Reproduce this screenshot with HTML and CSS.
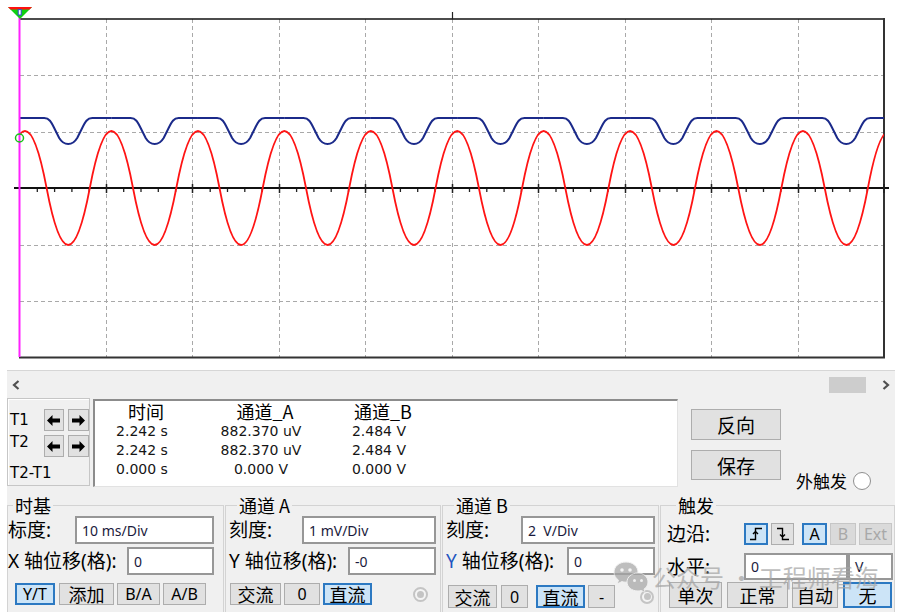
FILE: index.html
```html
<!DOCTYPE html>
<html lang="zh">
<head>
<meta charset="utf-8">
<title>示波器</title>
<link rel="stylesheet" href="styles.css">
</head>
<body>
<div class="scope">
  <svg class="plot" width="908" height="370" viewBox="0 0 908 370" xmlns="http://www.w3.org/2000/svg">
    <defs>
      <clipPath id="area"><rect x="20" y="10" width="864" height="348"/></clipPath>
      <path id="dip" d="M-43.3 118 H-24 C-19 118 -17 122 -14 128 L-9 138 C-6 143 -3 144 0 144 C3 144 6 143 9 138 L14 128 C17 122 19 118 24 118 H43.3"/>
    </defs>
    <path class="grid" d="M106.5 19V357 M192.5 19V357 M279.5 19V357 M365.5 19V357 M452.5 19V357 M538.5 19V357 M625.5 19V357 M711.5 19V357 M798.5 19V357 M20 75.5H884 M20 132.5H884 M20 245.5H884 M20 301.5H884"/>
    <path class="frame-top" d="M20 19H884"/>
    <path class="frame" d="M884 18V358 M19 357.5H885"/>
    <path class="axis" d="M14 188H889"/>
    <path class="ticks" d="M37.3 189V192 M54.6 189V192 M71.9 189V192 M89.2 189V192 M123.7 189V192 M141 189V192 M158.3 189V192 M175.6 189V192 M210.2 189V192 M227.5 189V192 M244.8 189V192 M262.1 189V192 M296.6 189V192 M313.9 189V192 M331.2 189V192 M348.5 189V192 M383.1 189V192 M400.4 189V192 M417.7 189V192 M435 189V192 M469.5 189V192 M486.8 189V192 M504.1 189V192 M521.4 189V192 M556 189V192 M573.3 189V192 M590.6 189V192 M607.9 189V192 M642.4 189V192 M659.7 189V192 M677 189V192 M694.3 189V192 M728.9 189V192 M746.2 189V192 M763.5 189V192 M780.8 189V192 M815.3 189V192 M832.6 189V192 M849.9 189V192 M867.2 189V192"/>
    <path class="majors" d="M106.5 184V193 M192.5 184V193 M279.5 184V193 M365.5 184V193 M452.5 184V193 M538.5 184V193 M625.5 184V193 M711.5 184V193 M798.5 184V193 M884 184V193"/>
    <g clip-path="url(#area)">
      <g class="chb">
        <use href="#dip" x="-18.25"/>
        <use href="#dip" x="68.2"/>
        <use href="#dip" x="154.65"/>
        <use href="#dip" x="241.1"/>
        <use href="#dip" x="327.55"/>
        <use href="#dip" x="414"/>
        <use href="#dip" x="500.45"/>
        <use href="#dip" x="586.9"/>
        <use href="#dip" x="673.35"/>
        <use href="#dip" x="759.8"/>
        <use href="#dip" x="846.25"/>
      </g>
      <path class="cha" d="M3.4 188 Q25 74 46.6 188 T89.8 188 T133 188 T176.3 188 T219.5 188 T262.7 188 T306 188 T349.2 188 T392.4 188 T435.6 188 T478.9 188 T522.1 188 T565.3 188 T608.5 188 T651.8 188 T695 188 T738.2 188 T781.4 188 T824.7 188 T867.9 188 T911.1 188"/>
    </g>
    <path class="trig" d="M452.5 12V19"/>
    <path class="cursor" d="M19.5 15V357"/>
    <polygon class="mk-green" points="8,7 32,7 20,19"/>
    <polygon class="mk-red" points="8,7 32,7 29.6,9.6 10.4,9.6"/>
    <rect class="mk-num" x="18.2" y="9.6" width="3" height="5.4"/>
    <circle class="mk-a" cx="19.5" cy="138" r="4"/>
  </svg>
</div>

<div class="panel">
  <div class="hscroll">
    <svg class="chev" width="8" height="10" viewBox="0 0 8 10"><polyline points="6.5,1 2,5 6.5,9"/></svg>
    <span class="thumb"></span>
    <svg class="chev chev-r" width="8" height="10" viewBox="0 0 8 10"><polyline points="1.5,1 6,5 1.5,9"/></svg>
  </div>

  <div class="cursors">
    <div class="tbox">
      <div class="trow">
        <span class="tlabel">T1</span>
        <span class="abtn"><svg width="13" height="11" viewBox="0 0 13 11"><path d="M0 5.5 L5.5 0 V3.5 H13 V7.5 H5.5 V11 Z"/></svg></span>
        <span class="abtn"><svg width="13" height="11" viewBox="0 0 13 11"><path d="M13 5.5 L7.5 0 V3.5 H0 V7.5 H7.5 V11 Z"/></svg></span>
      </div>
      <div class="trow trow2">
        <span class="tlabel">T2</span>
        <span class="abtn"><svg width="13" height="11" viewBox="0 0 13 11"><path d="M0 5.5 L5.5 0 V3.5 H13 V7.5 H5.5 V11 Z"/></svg></span>
        <span class="abtn"><svg width="13" height="11" viewBox="0 0 13 11"><path d="M13 5.5 L7.5 0 V3.5 H0 V7.5 H7.5 V11 Z"/></svg></span>
      </div>
      <div class="tlabel tdiff">T2-T1</div>
    </div>

    <div class="readout">
      <div class="rgrid">
        <span class="rh">时间</span><span class="rh">通道_A</span><span class="rh">通道_B</span>
        <span class="rv">2.242 s</span><span class="rv">882.370 uV</span><span class="rv">2.484 V</span>
        <span class="rv">2.242 s</span><span class="rv">882.370 uV</span><span class="rv">2.484 V</span>
        <span class="rv">0.000 s</span><span class="rv">0.000 V</span><span class="rv">0.000 V</span>
      </div>
    </div>

    <div class="side">
      <div class="sbtns">
        <span class="btn sbtn">反向</span>
        <span class="btn sbtn sbtn2">保存</span>
      </div>
      <div class="ext">外触发<span class="radio"></span></div>
    </div>
  </div>

  <div class="groups">
    <fieldset class="grp g-time">
      <legend>时基</legend>
      <div class="frow"><span class="lbl">标度:</span><span class="inp w-long">10 ms/Div</span></div>
      <div class="frow r2"><span class="lbl">X 轴位移(格):</span><span class="inp w-short">0</span></div>
      <div class="brow">
        <span class="btn on lat b-yt">Y/T</span>
        <span class="btn b-add">添加</span>
        <span class="btn lat b-ba">B/A</span>
        <span class="btn lat b-ab">A/B</span>
      </div>
    </fieldset>

    <fieldset class="grp g-cha">
      <legend>通道 A</legend>
      <div class="frow"><span class="lbl">刻度:</span><span class="inp w-long">1 mV/Div</span></div>
      <div class="frow r2"><span class="lbl">Y 轴位移(格):</span><span class="inp w-short">-0</span></div>
      <div class="brow">
        <span class="btn a-ac">交流</span>
        <span class="btn lat a-0">0</span>
        <span class="btn on a-dc">直流</span>
        <span class="dradio"></span>
      </div>
    </fieldset>

    <fieldset class="grp g-chb">
      <legend>通道 B</legend>
      <div class="frow"><span class="lbl">刻度:</span><span class="inp w-long">2  V/Div</span></div>
      <div class="frow r2"><span class="lbl"><span class="ylab">Y</span> 轴位移(格):</span><span class="inp w-short">0</span></div>
      <div class="brow">
        <span class="btn b-ac">交流</span>
        <span class="btn lat b-0">0</span>
        <span class="btn on b-dc">直流</span>
        <span class="btn lat b-minus">-</span>
        <span class="dradio b-radio"></span>
      </div>
    </fieldset>

    <fieldset class="grp g-trig">
      <legend>触发</legend>
      <div class="trow-a">
        <span class="lbl tl">边沿:</span>
        <span class="btn on e-btn"><svg width="16" height="14" viewBox="0 0 16 14"><path d="M2 12.5 H7.5 V1.5 H14 M5 7 L7.5 4.5 L10 7"/></svg></span>
        <span class="btn e-btn e-f"><svg width="16" height="14" viewBox="0 0 16 14"><path d="M2 1.5 H7.5 V12.5 H14 M5 7.5 L7.5 10 L10 7.5"/></svg></span>
        <span class="btn on lat src-a">A</span>
        <span class="btn off lat src-b">B</span>
        <span class="btn off lat src-ext">Ext</span>
      </div>
      <div class="trow-b">
        <span class="lbl tl">水平:</span>
        <span class="inp lvl">0</span>
        <span class="inp unit">V</span>
      </div>
      <div class="trow-c">
        <span class="btn m-once">单次</span>
        <span class="btn m-norm">正常</span>
        <span class="btn m-auto">自动</span>
        <span class="btn on m-none">无</span>
      </div>
    </fieldset>
  </div>
</div>

<div class="watermark">
  <svg class="wx" width="36" height="34" viewBox="0 0 36 34">
    <path class="wx-big" d="M13 2 C6 2 1 6.6 1 12.2 C1 15.4 2.7 18.2 5.4 20 L4.4 24 L8.8 21.6 C10.1 22 11.5 22.2 13 22.2 C20 22.2 25 17.8 25 12.2 C25 6.6 20 2 13 2 Z"/>
    <circle class="wx-eye" cx="9" cy="10" r="1.8"/>
    <circle class="wx-eye" cx="17" cy="10" r="1.8"/>
    <path class="wx-small" d="M25 13 C18.7 13 14 17 14 22 C14 27 18.7 31 25 31 C26.2 31 27.3 30.8 28.4 30.5 L32 32.5 L31.1 29 C33.5 27.5 35 25 35 22 C35 17 30.6 13 25 13 Z"/>
    <circle class="wx-eye" cx="21.5" cy="20.5" r="1.5"/>
    <circle class="wx-eye" cx="28.5" cy="20.5" r="1.5"/>
  </svg>
  <span class="wtext">公众号 · 工程师看海</span>
</div>
</body>
</html>
```

FILE: styles.css
```css
* { box-sizing: border-box; }
html, body { margin: 0; padding: 0; }
body {
  width: 908px;
  height: 612px;
  overflow: hidden;
  background: #ffffff;
  position: relative;
  font-family: "Noto Sans", "Noto Sans CJK SC", sans-serif;
  color: #000;
}

/* ---------- scope plot ---------- */
.scope { height: 370px; }
.plot { display: block; }
.grid { fill: none; stroke: #a9a9a9; stroke-width: 1; stroke-dasharray: 4 3; }
.frame-top { fill: none; stroke: #111; stroke-width: 1.5; }
.frame { fill: none; stroke: #333; stroke-width: 2; }
.axis { fill: none; stroke: #111; stroke-width: 2; }
.ticks { fill: none; stroke: #222; stroke-width: 1.3; }
.majors { fill: none; stroke: #222; stroke-width: 1.5; }
.chb { fill: none; stroke: #1b2a8a; stroke-width: 2; stroke-linejoin: round; }
.cha { fill: none; stroke: #ff1414; stroke-width: 1.8; }
.trig { fill: none; stroke: #222; stroke-width: 1.2; }
.cursor { fill: none; stroke: #ff22ff; stroke-width: 2; }
.mk-green { fill: #10d010; }
.mk-red { fill: #ff1010; }
.mk-num { fill: #ffffff; stroke: #2a4bd0; stroke-width: 1; }
.mk-a { fill: none; stroke: #18c018; stroke-width: 1.5; }

/* ---------- panel ---------- */
.panel {
  margin-left: 7px;
  width: 888px;
  height: 242px;
  background: #f0f0f0;
  border-top: 1px solid #d6d6d6;
  display: flex;
  flex-direction: column;
}
.hscroll {
  height: 27px;
  flex: none;
  display: flex;
  align-items: center;
  padding: 0 5px 0 5px;
}
.chev { display: block; }
.chev polyline { fill: none; stroke: #505050; stroke-width: 2.2; }
.thumb {
  margin-left: auto;
  width: 37px;
  height: 16px;
  background: #cdcdcd;
}
.chev-r { margin-left: 16px; }

/* cursors row */
.cursors {
  height: 88px;
  flex: none;
  display: flex;
  align-items: flex-start;
}
.tbox {
  width: 83px;
  height: 88px;
  border: 1px solid #c6c6c6;
  box-shadow: inset 1px 1px 0 #ffffff;
  padding-top: 10px;
  display: flex;
  flex-direction: column;
}
.trow {
  display: flex;
  align-items: center;
  gap: 4px;
  height: 22px;
}
.trow2 { margin-top: 4px; height: 23px; align-items: flex-start; }
.tlabel {
  font-family: "DejaVu Sans", sans-serif;
  font-size: 15px;
  line-height: 15px;
  width: 30px;
  margin-left: 2px;
  margin-right: -4px;
  padding-left: 0;
}
.tdiff { width: auto; margin-top: 5px; margin-left: 2px; line-height: 20px; }
.abtn {
  width: 21px;
  height: 22px;
  background: #e1e1e1;
  border: 1px solid #adadad;
  display: flex;
  align-items: center;
  justify-content: center;
}
.abtn svg { display: block; fill: #000; }
.trow .abtn:nth-child(2) { margin-left: 4px; }

.readout {
  margin-left: 3px;
  width: 585px;
  height: 88px;
  margin-top: 1px;
  background: #ffffff;
  border-top: 2px solid #8c8c8c;
  border-left: 2px solid #8c8c8c;
  border-right: 1px solid #e2e2e2;
  border-bottom: 1px solid #e2e2e2;
}
.rgrid {
  display: grid;
  grid-template-columns: 94px 144px 92px;
  grid-template-rows: 21px 19px 19px 19px;
}
.rh {
  font-family: "Noto Sans CJK SC", sans-serif;
  font-size: 18px;
  line-height: 21px;
  text-align: center;
  padding-left: 8px;
}
.rv {
  font-family: "DejaVu Sans", sans-serif;
  font-size: 14px;
  line-height: 19px;
  text-align: center;
  color: #151515;
}

.side {
  display: flex;
  margin-left: 13px;
}
.sbtns {
  display: flex;
  flex-direction: column;
  padding-top: 11px;
}
.btn {
  display: flex;
  align-items: center;
  justify-content: center;
  background: #e1e1e1;
  border: 1px solid #adadad;
  font-family: "Noto Sans CJK SC", sans-serif;
  font-size: 18px;
  line-height: 1;
  color: #000;
  flex: none;
}
.btn.lat { font-family: "Noto Sans", sans-serif; font-size: 16px; }
.btn.on { background: #cce4f7; border: 2px solid #2c79c2; }
.btn.off { color: #a8a8a8; background: #dadada; border-color: #c6c6c6; }
.sbtn { width: 90px; height: 31px; font-size: 19px; }
.sbtn2 { margin-top: 10px; height: 30px; }
.ext {
  margin-top: 73px;
  margin-left: 15px;
  display: flex;
  align-items: center;
  font-family: "Noto Sans CJK SC", sans-serif;
  font-size: 17px;
  line-height: 20px;
}
.radio {
  width: 18px;
  height: 18px;
  border-radius: 50%;
  background: #fff;
  border: 1px solid #8f8f8f;
  margin-left: 6px;
}

/* ---------- groups ---------- */
.groups {
  display: flex;
  flex: none;
}
.grp {
  margin: 8px 0 0 0;
  padding: 0;
  border: 1px solid #d3d3d3;
  border-bottom: none;
  height: 130px;
  min-width: 0;
}
.grp legend {
  font-family: "Noto Sans CJK SC", sans-serif;
  font-size: 18px;
  line-height: 22px;
  padding: 0 2px;
}
.g-time { width: 217px; padding: 0 9px 0 0; }
.g-time legend { margin-left: 5px; }
.g-cha { width: 216px; margin-left: 1px; padding: 0 4px 0 3px; }
.g-cha legend { margin-left: 8px; }
.g-chb { width: 217px; margin-left: 1px; padding: 0 3px 0 3px; }
.g-chb legend { margin-left: 8px; }
.g-trig { width: 235px; margin-left: 1px; padding: 0 1px 0 6px; }
.g-trig legend { margin-left: 9px; }

.frow {
  display: flex;
  align-items: center;
  height: 28px;
}
.frow.r2 { margin-top: 3px; }
.lbl {
  flex: 1;
  font-size: 19px;
  line-height: 24px;
  white-space: nowrap;
}
.ylab { color: #1f55c0; }
.inp {
  height: 28px;
  background: #fff;
  border: 2px solid #979797;
  display: flex;
  align-items: center;
  padding-left: 5px;
  font-family: "Noto Sans", sans-serif;
  font-size: 14px;
  color: #1a1a3c;
  white-space: pre;
  flex: none;
}
.w-long { width: 139px; }
.w-short { width: 87px; }
.g-cha .w-long, .g-chb .w-long { width: 134px; }
.g-cha .w-short, .g-chb .w-short { width: 88px; }

.brow {
  display: flex;
  align-items: center;
  margin-top: 8px;
  height: 22px;
}
.brow .btn { height: 22px; }
.b-yt { width: 40px; margin-left: 7px; }
.b-add { width: 55px; margin-left: 4px; }
.b-ba { width: 43px; margin-left: 3px; }
.b-ab { width: 43px; margin-left: 3px; }

.a-ac { width: 51px; margin-left: 1px; }
.a-0 { width: 36px; margin-left: 3px; }
.a-dc { width: 49px; margin-left: 3px; }
.dradio {
  width: 15px;
  height: 15px;
  border-radius: 50%;
  border: 2px solid #c4c4c4;
  background: #f4f4f4;
  margin-left: 41px;
  display: flex;
  align-items: center;
  justify-content: center;
}
.dradio::after {
  content: "";
  width: 7px;
  height: 7px;
  border-radius: 50%;
  background: #c4c4c4;
}

.g-chb .brow { margin-top: 10px; height: 23px; }
.g-chb .brow .btn { height: 23px; }
.b-ac { width: 49px; margin-left: 2px; }
.b-0 { width: 27px; margin-left: 4px; }
.b-dc { width: 49px; margin-left: 8px; }
.b-minus { width: 27px; margin-left: 3px; }
.b-radio { margin-left: 25px; width: 14px; height: 14px; }

.trow-a {
  display: flex;
  align-items: center;
  margin-top: 7px;
  height: 22px;
}
.tl { flex: none; width: 77px; }
.e-btn { width: 24px; height: 22px; }
.e-btn svg { display: block; fill: none; stroke: #000; stroke-width: 1.4; }
.e-f { margin-left: 3px; width: 23px; }
.src-a { width: 25px; height: 22px; margin-left: 8px; }
.src-b { width: 26px; height: 22px; margin-left: 3px; }
.src-ext { width: 33px; height: 22px; margin-left: 3px; }

.trow-b {
  display: flex;
  align-items: center;
  margin-top: 8px;
  height: 27px;
}
.lvl { width: 104px; height: 27px; }
.unit { width: 45px; height: 27px; }

.trow-c {
  display: flex;
  align-items: center;
  margin-top: 2px;
  height: 26px;
}
.trow-c .btn { height: 26px; }
.m-once { width: 53px; margin-left: 2px; }
.m-norm { width: 61px; margin-left: 5px; }
.m-auto { width: 46px; margin-left: 4px; }
.m-none { width: 49px; margin-left: 5px; }

/* ---------- watermark overlay ---------- */
.watermark {
  position: absolute;
  left: 613px;
  top: 560px;
  display: flex;
  align-items: center;
  gap: 3px;
  opacity: 0.72;
  pointer-events: none;
}
.wx { display: block; }
.wx-big, .wx-small { fill: #a6a6a6; stroke: #f0f0f0; stroke-width: 1; }
.wx-eye { fill: #f0f0f0; }
.wtext {
  font-family: "Noto Sans CJK SC", sans-serif;
  font-size: 24px;
  line-height: 30px;
  color: #a4a4a4;
  white-space: nowrap;
}
```
